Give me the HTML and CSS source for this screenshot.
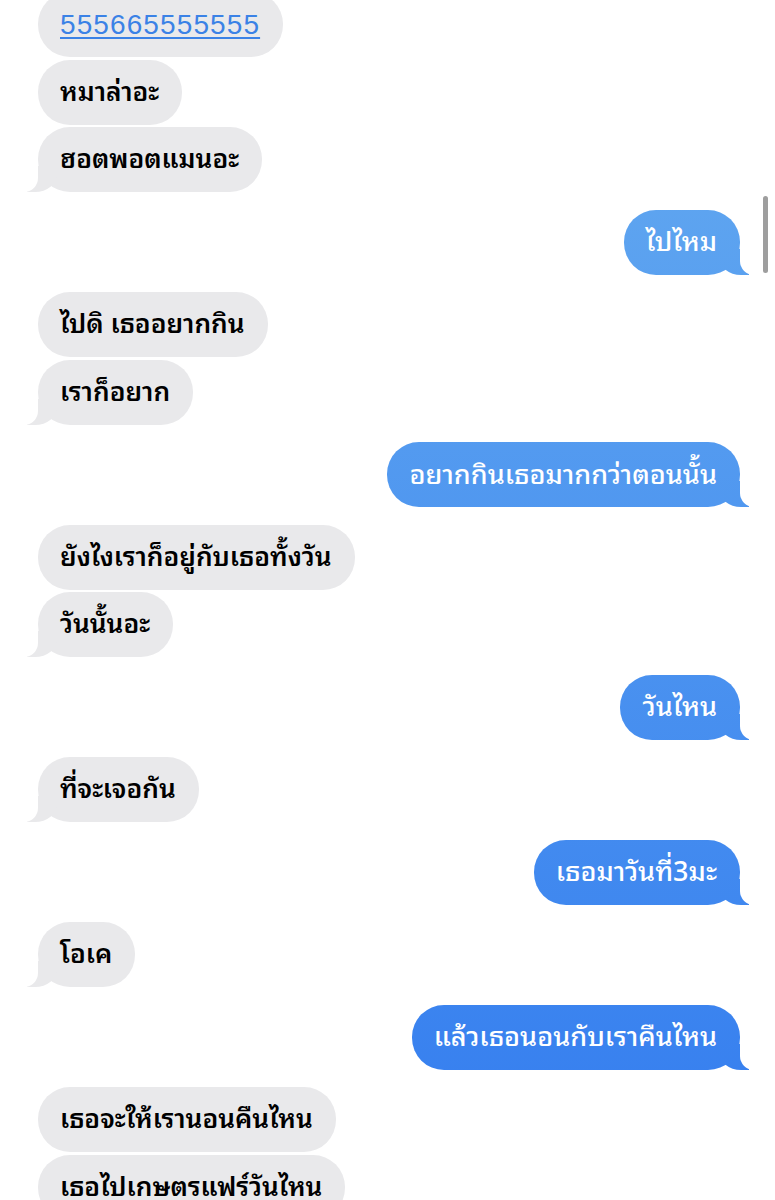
FILE: index.html
```html
<!DOCTYPE html>
<html lang="th">
<head>
<meta charset="utf-8">
<title>Messages</title>
<link rel="stylesheet" href="styles.css">
</head>
<body>
<div class="thread">
  <div class="msg them first"><a class="phone" href="#">555665555555</a></div>
  <div class="msg them">หมาล่าอะ</div>
  <div class="msg them tail">ฮอตพอตแมนอะ</div>

  <div class="msg me tail group">ไปไหม</div>

  <div class="msg them group">ไปดิ เธออยากกิน</div>
  <div class="msg them tail">เราก็อยาก</div>

  <div class="msg me tail group">อยากกินเธอมากกว่าตอนนั้น</div>

  <div class="msg them group">ยังไงเราก็อยู่กับเธอทั้งวัน</div>
  <div class="msg them tail">วันนั้นอะ</div>

  <div class="msg me tail group">วันไหน</div>

  <div class="msg them tail group">ที่จะเจอกัน</div>

  <div class="msg me tail group">เธอมาวันที่3มะ</div>

  <div class="msg them tail group">โอเค</div>

  <div class="msg me tail group">แล้วเธอนอนกับเราคืนไหน</div>

  <div class="msg them group">เธอจะให้เรานอนคืนไหน</div>
  <div class="msg them">เธอไปเกษตรแฟร์วันไหน</div>
</div>
<div class="scrollbar"></div>
</body>
</html>
```

FILE: styles.css
```css
html, body {
  margin: 0;
  padding: 0;
  background: #ffffff;
}

body {
  width: 775px;
  height: 1200px;
  overflow: hidden;
  position: relative;
  font-family: "Noto Sans Thai Looped", "Noto Sans Thai", "Noto Sans", "DejaVu Sans", sans-serif;
}

.thread {
  display: flex;
  flex-direction: column;
  padding: 0 35px 0 38px;
  margin-top: -8px;
}

.msg {
  position: relative;
  box-sizing: border-box;
  height: 65px;
  display: flex;
  align-items: center;
  padding: 0 23px 7px 22px;
  border-radius: 32px;
  font-size: 27px;
  margin-top: 2.5px;
  white-space: nowrap;
}

.msg.group {
  margin-top: 17.5px;
}

.msg.first {
  margin-top: 0;
  padding-bottom: 0;
}

.them {
  align-self: flex-start;
  background: #e9e9eb;
  color: #000000;
  font-weight: 600;
  font-size: 26.2px;
}

.me {
  align-self: flex-end;
  color: #ffffff;
  font-weight: 500;
  background: linear-gradient(to bottom, #66acf0 0%, #337cef 100%) fixed;
}

.phone {
  color: #3b82e6;
  text-decoration: underline;
  text-decoration-thickness: 2px;
  text-underline-offset: 3px;
  font-family: "Liberation Sans", Arial, sans-serif;
  font-weight: 400;
  font-size: 28px;
  letter-spacing: 1.1px;
}

/* bubble tails */
.tail::before,
.tail::after {
  content: "";
  position: absolute;
  bottom: 0;
  height: 26px;
}

.them.tail::before {
  left: -11px;
  width: 30px;
  background: #e9e9eb;
  border-bottom-right-radius: 22px 18px;
}

.them.tail::after {
  left: -32px;
  width: 32px;
  background: #ffffff;
  border-bottom-right-radius: 14px;
}

.me.tail::before {
  right: -9px;
  width: 30px;
  background: linear-gradient(to bottom, #66acf0 0%, #337cef 100%) fixed;
  border-bottom-left-radius: 22px 18px;
}

.me.tail::after {
  right: -30px;
  width: 30px;
  background: #ffffff;
  border-bottom-left-radius: 14px;
}

.scrollbar {
  position: absolute;
  left: 763px;
  top: 196px;
  width: 5px;
  height: 77px;
  border-radius: 3px;
  background: #9e9e9e;
}
```
